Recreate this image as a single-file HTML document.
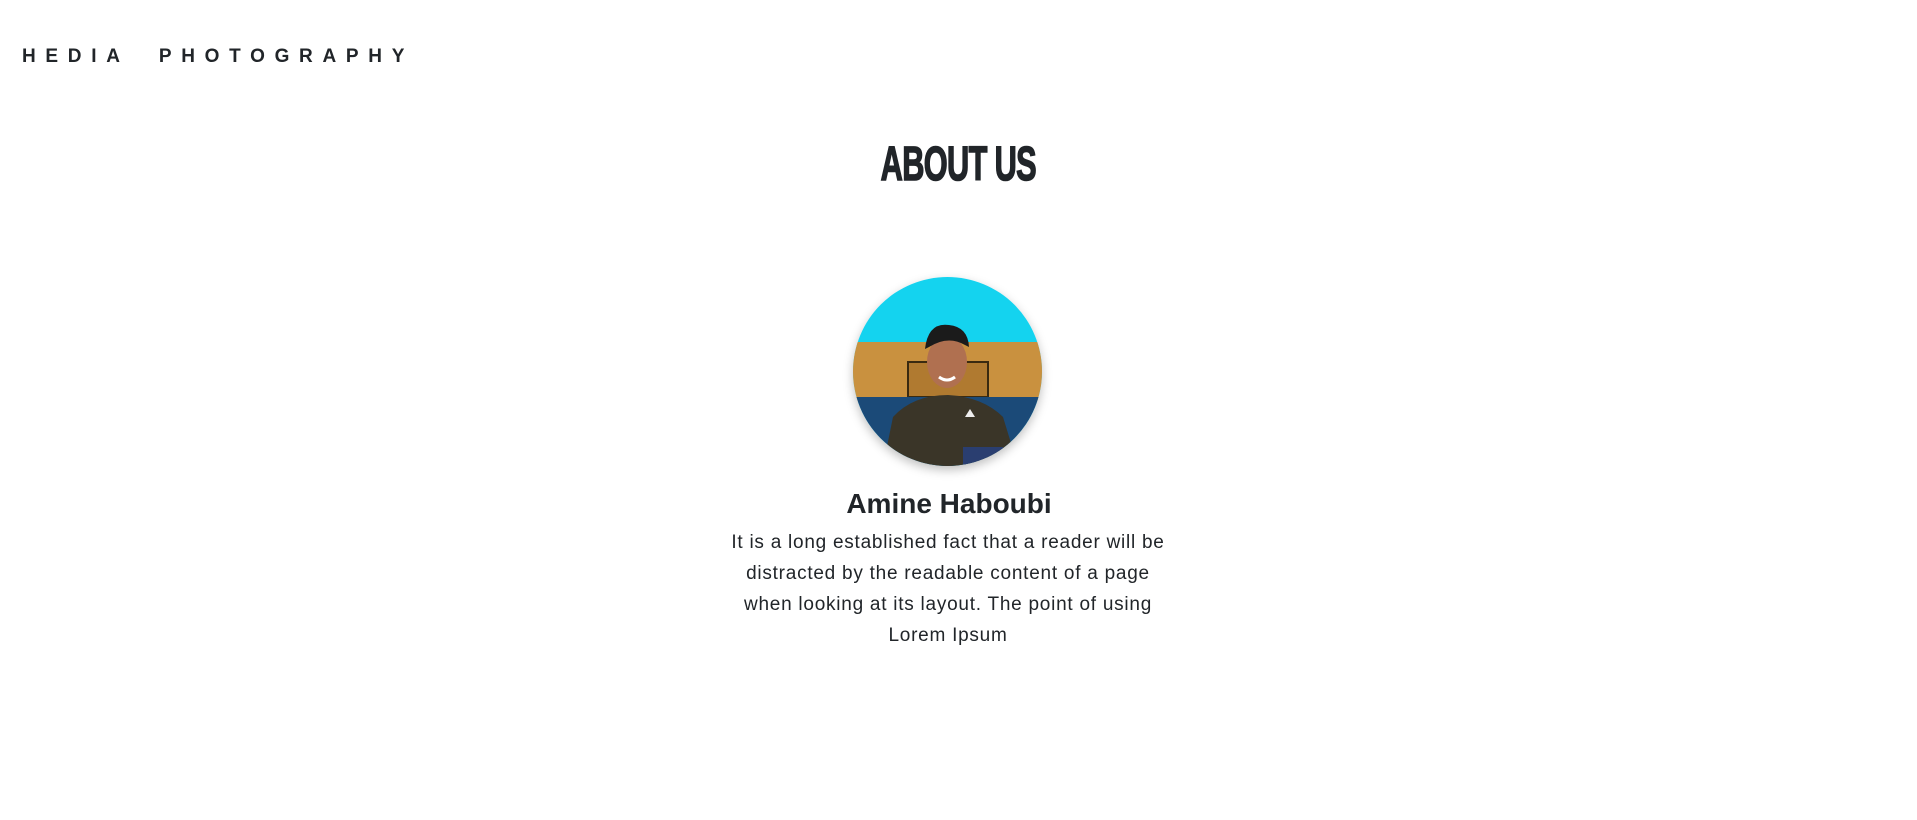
<!DOCTYPE html>
<html><head><meta charset="utf-8"><style>
html,body{margin:0;padding:0;background:#fff;width:1917px;height:820px;overflow:hidden;font-family:"Liberation Sans",sans-serif;color:#212529}
.logo{position:absolute;left:22px;top:46px;font-size:19px;font-weight:bold;letter-spacing:9.7px;white-space:nowrap}
.title{position:absolute;left:0;width:1917px;top:140px;text-align:center;font-size:48px;font-weight:900;line-height:50px}
.title span{display:inline-block;transform:scaleX(0.64);letter-spacing:-1px;-webkit-text-stroke:1.5px #212529}
.av{position:absolute;left:853px;top:277px;width:189px;height:189px;border-radius:50%;overflow:hidden;box-shadow:0 4px 10px rgba(0,0,0,.25)}
.name{position:absolute;left:0;width:1898px;top:486px;text-align:center;font-size:28px;font-weight:bold;line-height:36px}
.p{position:absolute;left:723px;width:450px;top:527px;text-align:center;font-size:19px;line-height:31px;letter-spacing:0.75px}
</style></head><body>
<div class="logo">HEDIA &nbsp;PHOTOGRAPHY</div>
<div class="title"><span>ABOUT US</span></div>
<div class="av"><svg width="189" height="189" viewBox="0 0 189 189">
<rect width="189" height="189" fill="#14d3ef"/>
<rect y="65" width="189" height="60" fill="#c9913f"/>
<rect x="55" y="85" width="80" height="35" fill="#b07a30" stroke="#3a2a10" stroke-width="2"/>
<rect y="120" width="189" height="69" fill="#1b4a78"/>
<path d="M30 189 L40 140 Q60 118 95 118 Q130 120 150 140 L165 189 Z" fill="#3a3528"/>
<rect x="110" y="170" width="40" height="19" fill="#2a3e70"/>
<ellipse cx="94" cy="85" rx="20" ry="26" fill="#b07050"/>
<path d="M72 72 Q75 45 96 48 Q115 50 116 70 L112 68 Q95 58 76 70 Z" fill="#1b1b1b"/>
<path d="M86 100 Q94 106 102 100" stroke="#fff" stroke-width="3" fill="none"/>
<path d="M112 140 l5 -8 l5 8 z" fill="#eee"/>
</svg></div>
<div class="name">Amine Haboubi</div>
<div class="p">It is a long established fact that a reader will be distracted by the readable content of a page when looking at its layout. The point of using Lorem Ipsum</div>
</body></html>
